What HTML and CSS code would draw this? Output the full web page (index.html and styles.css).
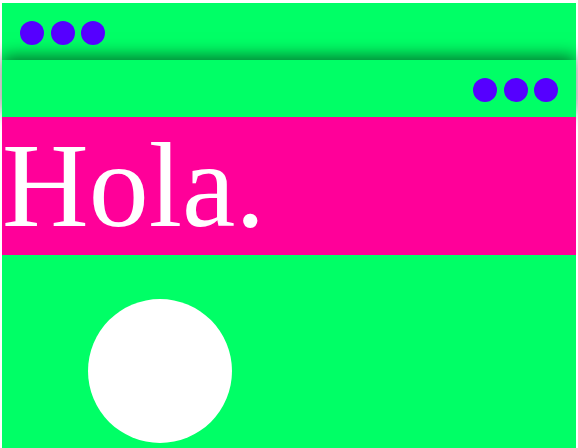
FILE: index.html
```html
<!DOCTYPE html>
<html>
<head>
<meta charset="utf-8">
<link rel="stylesheet" href="styles.css">
</head>
<body>
<div class="page">
  <div class="bar">
    <span class="dot"></span><span class="dot"></span><span class="dot"></span>
  </div>
  <div class="bar bar-right">
    <span class="dot"></span><span class="dot"></span><span class="dot"></span>
  </div>
  <h1 class="hero">Hola.</h1>
  <div class="stage">
    <div class="ball"></div>
  </div>
</div>
</body>
</html>
```
FILE: styles.css
```css
html, body {
  margin: 0;
  padding: 0;
  background: #ffffff;
}
.page {
  margin: 3px 2px 0;
  background: #00ff66;
  min-height: 445px;
}
.bar {
  display: flex;
  gap: 6.5px;
  padding: 18px 18px 15px;
  background: #00ff66;
}
.bar-right {
  justify-content: flex-end;
  box-shadow: 0 -4px 16px rgba(0, 0, 0, 0.55);
}
.dot {
  width: 24px;
  height: 24px;
  border-radius: 50%;
  background: #5500ff;
}
.hero {
  margin: 0;
  background: #ff0099;
  color: #ffffff;
  font-family: "Liberation Serif", "Times New Roman", serif;
  font-weight: normal;
  font-size: 120px;
  line-height: normal;
}
.stage {
  padding: 44px 0 0 86px;
}
.ball {
  width: 144px;
  height: 144px;
  border-radius: 50%;
  background: #ffffff;
}
```
